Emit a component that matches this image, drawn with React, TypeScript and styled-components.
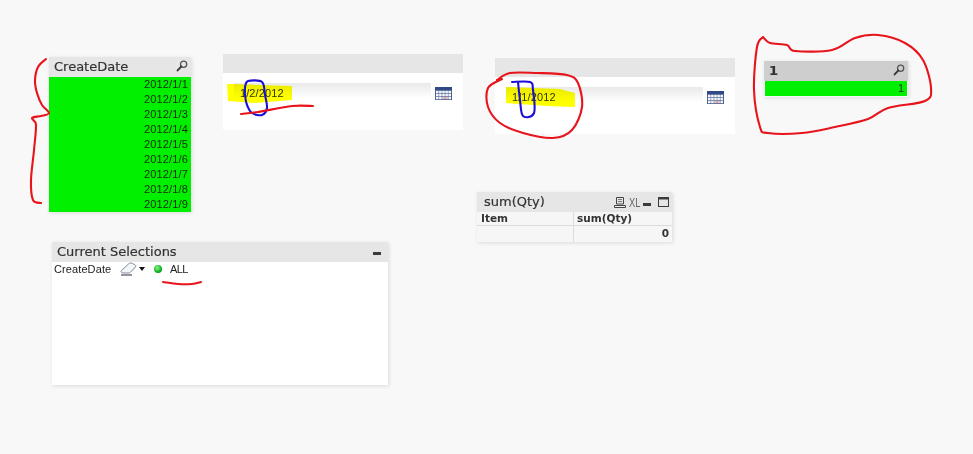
import React from "react";
import styled, { createGlobalStyle } from "styled-components";

const Global = createGlobalStyle`
  html, body { margin: 0; padding: 0; background: #f8f8f8; }
  #root { width: 973px; height: 454px; overflow: hidden; }
`;

const Sheet = styled.div`
  position: relative;
  width: 973px;
  height: 454px;
  background: #f8f8f8;
  font-family: "Liberation Sans", Arial, sans-serif;
  color: #222;
`;

const SheetObject = styled.section<{ $x: number; $y: number; $w: number; $h: number; $flat?: boolean }>`
  position: absolute;
  left: ${(p) => p.$x}px;
  top: ${(p) => p.$y}px;
  width: ${(p) => p.$w}px;
  height: ${(p) => p.$h}px;
  display: flex;
  flex-direction: column;
  box-shadow: ${(p) => (p.$flat ? "none" : "1px 1px 4px rgba(0,0,0,.12)")};
`;

const Caption = styled.header<{ $h?: number; $dark?: boolean }>`
  flex: 0 0 ${(p) => p.$h ?? 20}px;
  display: flex;
  align-items: center;
  justify-content: space-between;
  padding: 0 3px 2px 5px;
  box-sizing: border-box;
  background: ${(p) => (p.$dark ? "#cecece" : "#e6e6e6")};
  color: #333;
  font-family: "DejaVu Sans", Verdana, sans-serif;
  font-size: 13px;
  -webkit-text-stroke: 0.2px #333;
`;

const CaptionTitle = styled.span`
  margin-left: 2px;
`;

const CaptionIcons = styled.span`
  display: flex;
  align-items: center;
  gap: 3px;
  margin-top: 2px;
`;

const MinimizeSlot = styled.span`
  display: flex;
  margin-right: 3px;
`;

const XL = styled.span`
  font-family: "Liberation Sans", Arial, sans-serif;
  font-size: 13px;
  color: #666;
  -webkit-text-stroke: 0;
  display: inline-block;
  width: 10px;
  transform: scaleX(0.72);
  transform-origin: left center;
`;

const ListBody = styled.div`
  flex: 1;
  background: #00f000;
`;

const ListRow = styled.div`
  height: 15px;
  line-height: 15px;
  text-align: right;
  padding-right: 3px;
  font-size: 11px;
  letter-spacing: 0.15px;
  color: #1c2a10;
`;

const DateBody = styled.div`
  flex: 1;
  background: #fff;
  display: flex;
  align-items: flex-start;
  padding: 10px 11px 0 11px;
  gap: 4px;
`;

const DateInput = styled.div`
  flex: 1;
  height: 15px;
  background: linear-gradient(#e9e9e9, #ffffff);
  font-size: 11px;
  line-height: 20px;
  padding-left: 6px;
  letter-spacing: 0.1px;
  color: #333;
`;

const CalendarSlot = styled.span`
  flex: 0 0 17px;
  margin-top: 4px;
  display: flex;
`;

const OneBody = styled.div`
  flex: 1;
  background: #00f000;
  margin: 0 1px 1px;
  text-align: right;
  padding-right: 3px;
  font-size: 11px;
  line-height: 15px;
  color: #1c2a10;
`;

const Table = styled.div`
  flex: 1;
  background: #f6f6f6;
  display: grid;
  grid-template-columns: 97px 1fr;
  grid-template-rows: 14px 1fr;
`;

const Cell = styled.div<{ $head?: boolean; $right?: boolean }>`
  border-right: 1px solid #dcdcdc;
  border-bottom: 1px solid #dcdcdc;
  font-family: "DejaVu Sans", Verdana, sans-serif;
  font-size: 10.5px;
  font-weight: ${(p) => (p.$head || p.$right ? 700 : 400)};
  line-height: ${(p) => (p.$head ? 13 : 15)}px;
  padding: 0 3px 0 4px;
  text-align: ${(p) => (p.$right ? "right" : "left")};
  color: #333;
  &:nth-child(2n) { border-right: 0; padding-left: 3px; }
  &:nth-child(n + 3) { border-bottom: 0; }
`;

const SelectionBody = styled.div`
  flex: 1;
  background: #fff;
  padding: 0 2px;
`;

const SelectionRow = styled.div`
  display: flex;
  align-items: center;
  height: 14px;
  font-size: 11px;
  letter-spacing: 0.1px;
  color: #222;
`;

const FieldName = styled.span`
  width: 66px;
`;

const Caret = styled.span`
  width: 0;
  height: 0;
  margin-left: 1px;
  border-left: 3.5px solid transparent;
  border-right: 3.5px solid transparent;
  border-top: 4px solid #111;
`;

const Dot = styled.span`
  width: 8px;
  height: 8px;
  margin: 0 8px 0 9px;
  border-radius: 50%;
  background: radial-gradient(circle at 40% 35%, #8af58a, #10b020 60%, #0a7d18);
`;

const AllValue = styled.span`
  letter-spacing: -0.6px;
`;

const Annotations = styled.svg`
  position: absolute;
  left: 0;
  top: 0;
  width: 973px;
  height: 454px;
  pointer-events: none;
`;

const Highlight = styled.path`
  fill: #ffff00;
  mix-blend-mode: multiply;
`;

const Scribble = styled.path<{ $color: string }>`
  fill: none;
  stroke: ${(p) => p.$color};
  stroke-width: 2.1px;
  stroke-linecap: round;
  stroke-linejoin: round;
`;

type Pt = [number, number];

const smooth = (pts: Pt[]) => {
  let d = `M${pts[0][0]} ${pts[0][1]}`;
  for (let i = 0; i < pts.length - 1; i++) {
    const p0 = pts[Math.max(i - 1, 0)];
    const p1 = pts[i];
    const p2 = pts[i + 1];
    const p3 = pts[Math.min(i + 2, pts.length - 1)];
    const c1x = p1[0] + (p2[0] - p0[0]) / 6;
    const c1y = p1[1] + (p2[1] - p0[1]) / 6;
    const c2x = p2[0] - (p3[0] - p1[0]) / 6;
    const c2y = p2[1] - (p3[1] - p1[1]) / 6;
    d += ` C${c1x.toFixed(1)} ${c1y.toFixed(1)} ${c2x.toFixed(1)} ${c2y.toFixed(1)} ${p2[0]} ${p2[1]}`;
  }
  return d;
};

const Search = () => (
  <svg width="12" height="12" viewBox="0 0 12 12">
    <circle cx="7.6" cy="4.2" r="3.1" fill="none" stroke="#555" strokeWidth="1.3" />
    <path d="M5.2 6.6 1.6 10.4" stroke="#3a3a3a" strokeWidth="2" strokeLinecap="round" />
  </svg>
);

const Calendar = () => (
  <svg width="17" height="13" viewBox="0 0 17 13">
    <rect width="17" height="13" fill="#4d6391" />
    <rect width="17" height="3" fill="#2f4a86" />
    {[0, 1, 2].map((r) =>
      [0, 1, 2, 3, 4].map((c) => (
        <rect
          key={`${r}-${c}`}
          x={1 + c * 3.1}
          y={3.8 + r * 3}
          width="2.6"
          height="2.4"
          fill={r === 2 && c > 1 && c < 4 ? "#f0c4c8" : "#f4f6fb"}
        />
      )),
    )}
  </svg>
);

const Printer = () => (
  <svg width="12" height="11" viewBox="0 0 12 11">
    <path d="M2.5.5h7v6.5h-7z" fill="none" stroke="#444" />
    <path d="M4 2.5h4M4 4.5h4" stroke="#777" />
    <path d="M.5 8.5h11v2H.5z" fill="#eee" stroke="#444" />
  </svg>
);

const Minimize = () => (
  <svg width="10" height="10" viewBox="0 0 10 10">
    <rect x="1" y="6" width="8" height="3" fill="#3c3c3c" />
  </svg>
);

const Maximize = () => (
  <svg width="11" height="10" viewBox="0 0 11 10">
    <rect x=".5" y=".5" width="10" height="9" fill="none" stroke="#3c3c3c" />
    <rect width="11" height="2.5" fill="#3c3c3c" />
  </svg>
);

const Eraser = () => (
  <svg width="18" height="14" viewBox="0 0 18 14">
    <path d="M1.5 8.5 8.5 2c1.2-1 2.6-1.2 3.8-.6l2.5 1.3c1.2.8 1.2 2 .2 3L9.5 11H4c-2.5 0-3.6-1-2.5-2.5Z" fill="#f4f6fa" stroke="#7f879c" />
    <path d="M1 13h11" stroke="#2a2a3a" strokeWidth="1" />
  </svg>
);

const dates = Array.from({ length: 9 }, (_, i) => `2012/1/${i + 1}`);

const bracket: Pt[] = [[46,59],[38,67],[35,80],[37,93],[42,105],[49,113],[41,116],[32,118],[36,125],[34,150],[31,180],[33,200],[41,203]];
const blueOne: Pt[] = [[245,87],[248,81],[262,82],[265,95],[267,108],[262,115],[252,113],[247,105],[245,95],[245,87]];
const underlineOne: Pt[] = [[241,114],[258,112],[292,106],[313,106]];
const circleTwo: Pt[] = [[502,79],[488,88],[488,107],[500,123],[523,133],[553,138],[572,130],[582,107],[578,83],[567,75],[537,73],[510,73],[497,80]];
const blueTwo: Pt[] = [[512,82],[530,82],[533,90],[534,113],[523,116],[520,100],[518,82]];
const blob: Pt[] = [[763,37],[757,47],[754,90],[760,127],[768,133],[802,133],[835,127],[868,119],[888,108],[925,101],[931,88],[923,60],[905,43],[878,35],[855,38],[832,50],[795,51],[787,45],[770,43],[763,37]];
const underlineAll: Pt[] = [[163,282],[178,284],[192,284],[201,282]];

export default function App() {
  return (
    <Sheet>
      <Global />

      <SheetObject $x={49} $y={57} $w={142} $h={155}>
        <Caption>
          CreateDate
          <Search />
        </Caption>
        <ListBody>
          {dates.map((d) => (
            <ListRow key={d}>{d}</ListRow>
          ))}
        </ListBody>
      </SheetObject>

      <SheetObject $x={223} $y={54} $w={240} $h={76} $flat>
        <Caption $h={19} />
        <DateBody>
          <DateInput>1/2/2012</DateInput>
          <CalendarSlot>
            <Calendar />
          </CalendarSlot>
        </DateBody>
      </SheetObject>

      <SheetObject $x={495} $y={58} $w={240} $h={76} $flat>
        <Caption $h={19} />
        <DateBody>
          <DateInput>1/1/2012</DateInput>
          <CalendarSlot>
            <Calendar />
          </CalendarSlot>
        </DateBody>
      </SheetObject>

      <SheetObject $x={764} $y={61} $w={144} $h={36}>
        <Caption $dark>
          <b>1</b>
          <Search />
        </Caption>
        <OneBody>1</OneBody>
      </SheetObject>

      <SheetObject $x={477} $y={192} $w={195} $h={50}>
        <Caption>
          <CaptionTitle>sum(Qty)</CaptionTitle>
          <CaptionIcons>
            <Printer />
            <XL>XL</XL>
            <MinimizeSlot>
              <Minimize />
            </MinimizeSlot>
            <Maximize />
          </CaptionIcons>
        </Caption>
        <Table>
          <Cell $head>Item</Cell>
          <Cell $head>sum(Qty)</Cell>
          <Cell />
          <Cell $right>0</Cell>
        </Table>
      </SheetObject>

      <SheetObject $x={52} $y={242} $w={336} $h={143}>
        <Caption>
          Current Selections
          <MinimizeSlot>
            <Minimize />
          </MinimizeSlot>
        </Caption>
        <SelectionBody>
          <SelectionRow>
            <FieldName>CreateDate</FieldName>
            <Eraser />
            <Caret />
            <Dot />
            <AllValue>ALL</AllValue>
          </SelectionRow>
        </SelectionBody>
      </SheetObject>

      <Annotations viewBox="0 0 973 454">
        <Highlight d="M227 84 L233 84 L292 86 L292 100 L255 103 L228 101 Z" />
        <Highlight d="M506 87 L560 89 L575 93 L575 107 L547 106 L506 103 Z" />
        <Scribble $color="#e8141c" d={smooth(bracket)} />
        <Scribble $color="#1a10d8" d={smooth(blueOne)} />
        <Scribble $color="#e8141c" d={smooth(underlineOne)} />
        <Scribble $color="#e8141c" d={smooth(circleTwo)} />
        <Scribble $color="#1a10d8" d={smooth(blueTwo)} />
        <Scribble $color="#e8141c" d={smooth(blob)} />
        <Scribble $color="#e8141c" d={smooth(underlineAll)} />
      </Annotations>
    </Sheet>
  );
}
